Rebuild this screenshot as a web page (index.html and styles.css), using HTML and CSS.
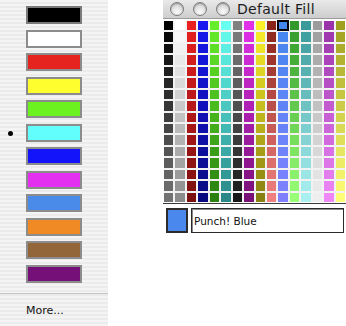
FILE: index.html
```html
<!DOCTYPE html>
<html lang="en">
<head>
<meta charset="utf-8">
<title>Fill colour</title>
<link rel="stylesheet" href="styles.css">
</head>
<body>
  <nav class="menu">
    <ul class="swatches">
      <li class="row"><span class="mark"></span><span class="swatch c-black"></span></li>
      <li class="row"><span class="mark"></span><span class="swatch c-white"></span></li>
      <li class="row"><span class="mark"></span><span class="swatch c-red"></span></li>
      <li class="row"><span class="mark"></span><span class="swatch c-yellow"></span></li>
      <li class="row"><span class="mark"></span><span class="swatch c-green"></span></li>
      <li class="row"><span class="mark"><span class="dot"></span></span><span class="swatch c-cyan"></span></li>
      <li class="row"><span class="mark"></span><span class="swatch c-blue"></span></li>
      <li class="row"><span class="mark"></span><span class="swatch c-magenta"></span></li>
      <li class="row"><span class="mark"></span><span class="swatch c-sky"></span></li>
      <li class="row"><span class="mark"></span><span class="swatch c-orange"></span></li>
      <li class="row"><span class="mark"></span><span class="swatch c-brown"></span></li>
      <li class="row"><span class="mark"></span><span class="swatch c-purple"></span></li>
    </ul>
    <div class="sep"></div>
    <div class="more">More...</div>
  </nav>

  <section class="window">
    <header class="titlebar">
      <span class="btn"></span>
      <span class="btn"></span>
      <span class="btn"></span>
      <span class="title">Default Fill</span>
    </header>
    <div class="grid" id="grid"></div>
    <div class="rule"></div>
    <div class="bottom">
      <span class="well"></span>
      <span class="field">Punch! Blue</span>
    </div>
  </section>
  <script src="script.js"></script>
</body>
</html>
```

FILE: styles.css
```css
html, body {
  margin: 0;
  padding: 0;
}
body {
  width: 346px;
  height: 326px;
  overflow: hidden;
  background: #ffffff;
  display: flex;
  justify-content: space-between;
  align-items: flex-start;
  font-family: "DejaVu Sans", "Liberation Sans", sans-serif;
  color: #111;
}

/* ---------- left popup menu ---------- */
.menu {
  width: 108px;
  height: 326px;
  display: flex;
  flex-direction: column;
  background: repeating-linear-gradient(to bottom, #f4f4f4 0 2px, #ebebeb 2px 4px);
}
.swatches {
  list-style: none;
  margin: 0;
  padding: 6px 0 0 0;
  display: flex;
  flex-direction: column;
  gap: 5.55px;
}
.row {
  display: flex;
  align-items: center;
  height: 18px;
}
.mark {
  width: 26px;
  height: 18px;
  display: flex;
  align-items: center;
}
.dot {
  width: 5px;
  height: 5px;
  margin-left: 8px;
  margin-top: 1px;
  border-radius: 50%;
  background: #000;
}
.swatch {
  width: 56px;
  height: 18px;
  box-sizing: border-box;
  border: 2px solid #8c8c8c;
}
.c-black { background: #000000; border-color: #7a7a7a; }
.c-white { background: #ffffff; }
.c-red { background: #e5231f; }
.c-yellow { background: #fefe2e; }
.c-green { background: #6cf21e; }
.c-cyan { background: #62fefe; }
.c-blue { background: #1414fa; }
.c-magenta { background: #e42ef0; }
.c-sky { background: #4a8ae8; }
.c-orange { background: #ef8a24; }
.c-brown { background: #93663a; }
.c-purple { background: #741078; }

.sep {
  margin-top: 10px;
  height: 1px;
  background: #c4c4c4;
}
.more {
  padding: 10px 0 0 26px;
  font-size: 11px;
  color: #111;
}

/* ---------- right palette window ---------- */
.window {
  width: 183px;
  display: flex;
  flex-direction: column;
}
.titlebar {
  height: 18px;
  border-bottom: 1px solid #9c9c9c;
  background: linear-gradient(to bottom, #e9e9e9, #cdcdcd);
  display: flex;
  align-items: center;
  padding-left: 7px;
  gap: 9px;
}
.btn {
  width: 14px;
  height: 14px;
  box-sizing: border-box;
  border-radius: 50%;
  border: 1px solid #7c7c7c;
  background: radial-gradient(circle at 50% 72%, #fbfbfb 0, #e2e2e2 45%, #b9b9b9 100%);
  box-shadow: inset 0 1px 1px rgba(0, 0, 0, 0.25);
  flex: none;
}
.title {
  margin-left: -2px;
  font-size: 14px;
  line-height: 18px;
  letter-spacing: 0.3px;
  color: #1c1c1c;
  white-space: nowrap;
}
.grid {
  margin: 2px 0 0 1px;
  width: 181px;
  display: grid;
  grid-template-columns: repeat(16, 1fr);
  grid-auto-rows: 9.44px;
  gap: 2px;
  background: #f2f2f2;
}
.cell {
  box-sizing: border-box;
}
.cell.selected {
  border: 1px solid #000;
  box-shadow: 0 0 0 1px #000;
}
.rule {
  margin-top: 1px;
  height: 1px;
  background: #3a3a3a;
}
.bottom {
  display: flex;
  gap: 3px;
  padding: 4px 0 0 3px;
}
.well {
  width: 22px;
  height: 25px;
  box-sizing: border-box;
  border: 2px solid #2c2c2c;
  background: #4a88ee;
  flex: none;
}
.field {
  width: 153px;
  height: 25px;
  box-sizing: border-box;
  border: 1px solid #2a2a2a;
  box-shadow: inset 1px 1px 0 #8a8a8a;
  padding-left: 2px;
  display: flex;
  align-items: center;
  font-size: 10.5px;
  color: #111;
  background: #fff;
}
```

FILE: script.js
```js
(function () {
  var cols = [
    ["#000000", "#737373"],
    ["#ffffff", "#8c8c8c"],
    ["#e82020", "#7a1010"],
    ["#1818ee", "#0a0a80"],
    ["#66ee2a", "#2a8010"],
    ["#66fff0", "#2a8888"],
    ["#808080", "#181818"],
    ["#e030e8", "#781078"],
    ["#fcf22a", "#888010"],
    ["#8a2418", "#f08080"],
    ["#4488ee", "#8080ff"],
    ["#33992a", "#99ff77"],
    ["#3a9a9a", "#aaf0f0"],
    ["#9c9c9c", "#eeeeee"],
    ["#9a33aa", "#ee88f8"],
    ["#a0a020", "#ffff77"]
  ];
  function hex(h) {
    return [parseInt(h.substr(1, 2), 16), parseInt(h.substr(3, 2), 16), parseInt(h.substr(5, 2), 16)];
  }
  var grid = document.getElementById("grid");
  for (var r = 0; r < 16; r++) {
    var t = r / 15;
    for (var c = 0; c < 16; c++) {
      var a = hex(cols[c][0]), b = hex(cols[c][1]);
      var rgb = [0, 1, 2].map(function (i) { return Math.round(a[i] + (b[i] - a[i]) * t); });
      var d = document.createElement("div");
      d.className = "cell" + (r === 0 && c === 10 ? " selected" : "");
      d.style.background = "rgb(" + rgb.join(",") + ")";
      grid.appendChild(d);
    }
  }
})();
```
